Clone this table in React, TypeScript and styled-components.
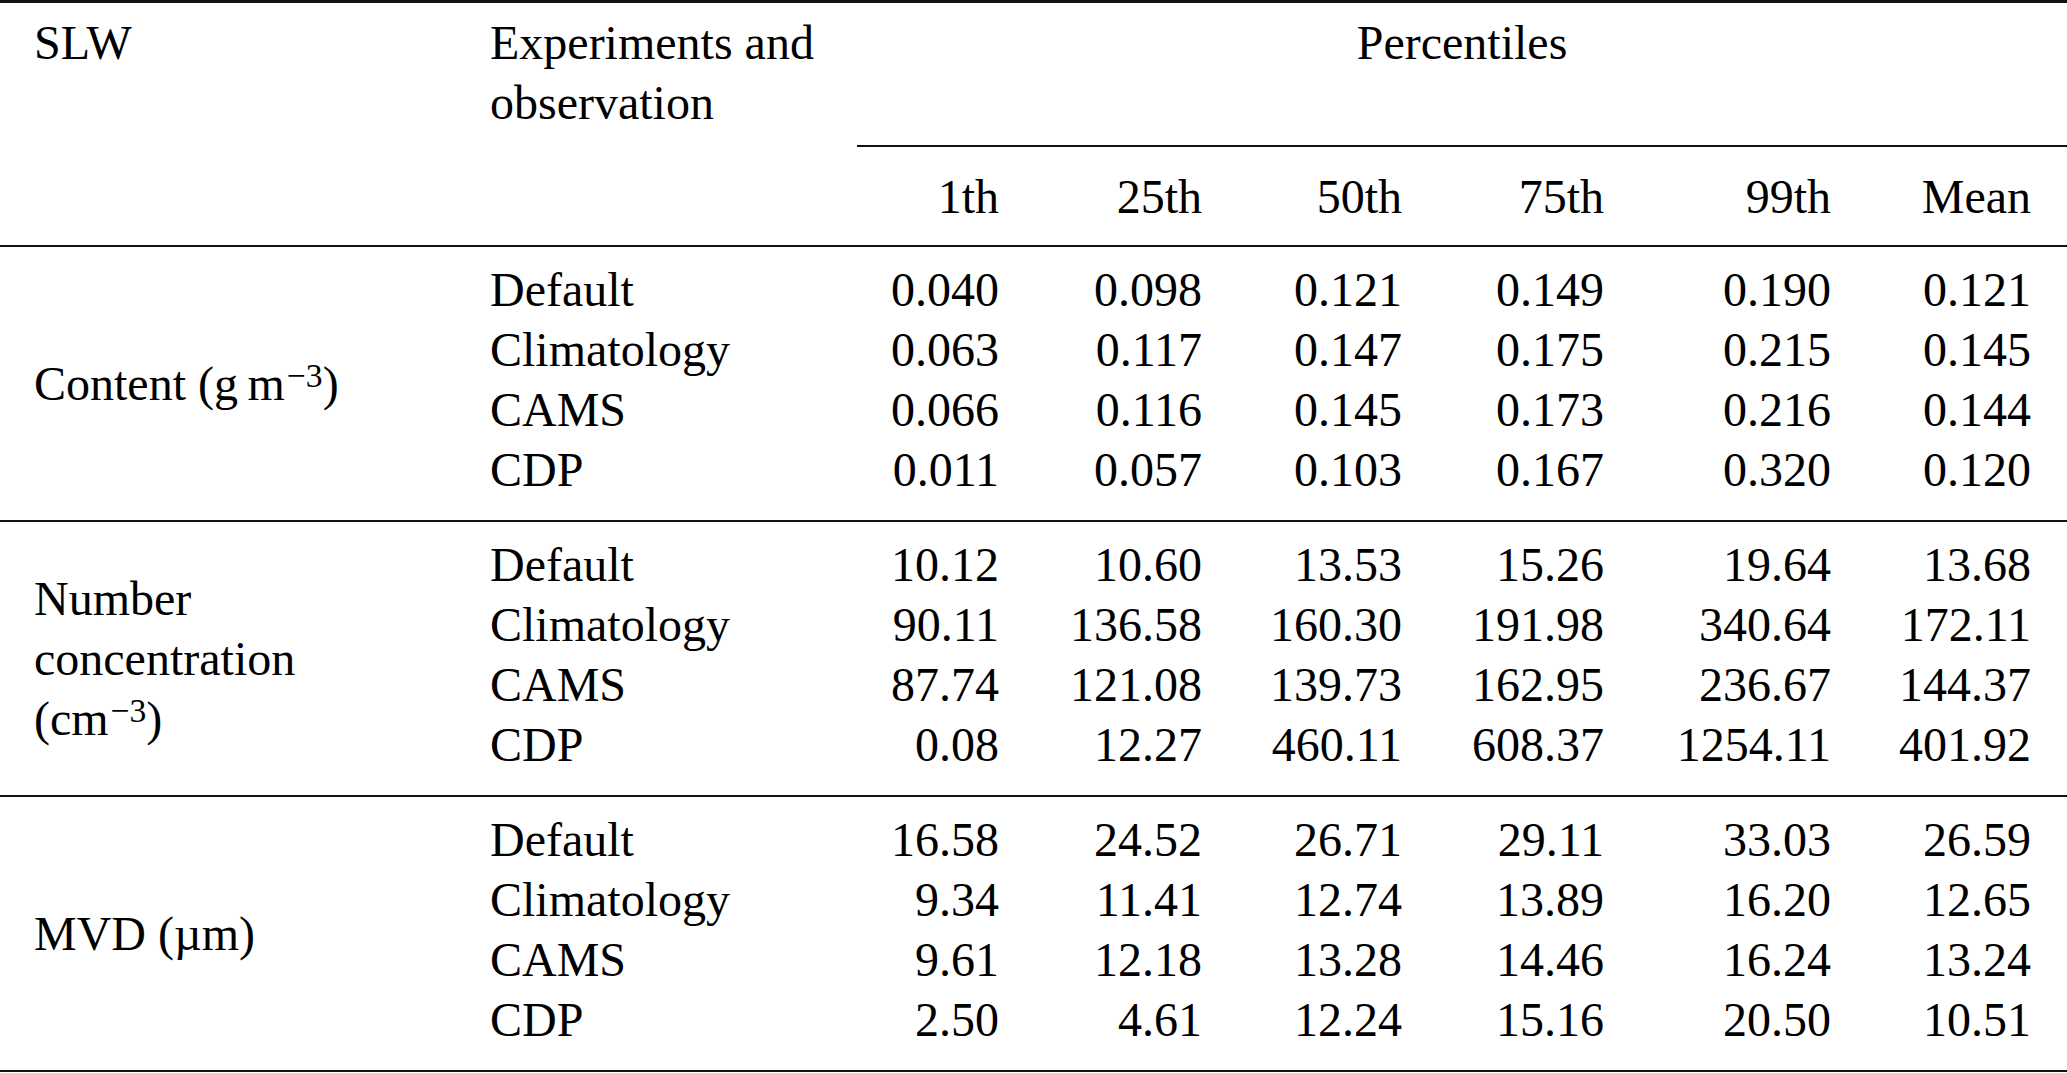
import React from "react";
import styled, { createGlobalStyle } from "styled-components";

type Edge = "first" | "mid" | "last";

// Styled components for the table

const GlobalStyle = createGlobalStyle`
  html, body {
    margin: 0;
    padding: 0;
    background: #fff;
  }
  body {
    font-family: "Liberation Serif", "Times New Roman", serif;
    color: #000;
  }
`;

// whole table, full page width
const Table = styled.table`
  width: 2067px;
  table-layout: fixed;
  border-collapse: collapse;
  border-top: 3px solid #111;
  border-bottom: 2px solid #111;
  font-size: 48px;
  line-height: 60px;
`;

// header cells spanning both header rows
const HeadCell = styled.th`
  font-weight: normal;
  text-align: left;
  vertical-align: top;
  padding: 10px 0 0 34px;
  white-space: nowrap;
`;

// "Percentiles" with its partial rule under it
const SpanCell = styled.th`
  font-weight: normal;
  text-align: center;
  vertical-align: top;
  padding: 10px 0 72px 0;
  border-bottom: 2px solid #111;
`;

// percentile column titles
const PctCell = styled.th`
  font-weight: normal;
  text-align: right;
  padding: 20px 36px 18px 0;
`;

// each SLW group, separated by a rule
const Block = styled.tbody`
  border-top: 2px solid #111;
`;

const LabelCell = styled.td`
  vertical-align: middle;
  padding: 0 0 0 34px;
  white-space: nowrap;
`;

const NameCell = styled.td<{ $edge: Edge }>`
  padding: ${(p) => (p.$edge === "first" ? "13px" : "0")} 0 ${(p) => (p.$edge === "last" ? "20px" : "0")} 34px;
  white-space: nowrap;
`;

const NumCell = styled.td<{ $edge: Edge }>`
  text-align: right;
  padding: ${(p) => (p.$edge === "first" ? "13px" : "0")} 36px ${(p) => (p.$edge === "last" ? "20px" : "0")} 0;
  white-space: nowrap;
`;

// superscript exponent that does not stretch the line
const Sup = styled.span`
  font-size: 0.7em;
  line-height: 0;
  vertical-align: 0.36em;
  margin-left: 2px;
`;

// One row of the table: experiment name plus the six percentile values
interface Line {
    name: string;
    values: string[];
}

// A block of four lines that share one SLW label
interface Group {
    key: string;
    label: React.ReactNode;
    lines: Line[];
}

const groups: Group[] = [
    {
        key: "content",
        label: <>Content (g{"\u2009"}m<Sup>−3</Sup>)</>,
        lines: [
            { name: "Default", values: ["0.040", "0.098", "0.121", "0.149", "0.190", "0.121"] },
            { name: "Climatology", values: ["0.063", "0.117", "0.147", "0.175", "0.215", "0.145"] },
            { name: "CAMS", values: ["0.066", "0.116", "0.145", "0.173", "0.216", "0.144"] },
            { name: "CDP", values: ["0.011", "0.057", "0.103", "0.167", "0.320", "0.120"] },
        ],
    },
    {
        key: "number",
        label: <>Number<br />concentration<br />(cm<Sup>−3</Sup>)</>,
        lines: [
            { name: "Default", values: ["10.12", "10.60", "13.53", "15.26", "19.64", "13.68"] },
            { name: "Climatology", values: ["90.11", "136.58", "160.30", "191.98", "340.64", "172.11"] },
            { name: "CAMS", values: ["87.74", "121.08", "139.73", "162.95", "236.67", "144.37"] },
            { name: "CDP", values: ["0.08", "12.27", "460.11", "608.37", "1254.11", "401.92"] },
        ],
    },
    {
        key: "mvd",
        label: <>MVD (µm)</>,
        lines: [
            { name: "Default", values: ["16.58", "24.52", "26.71", "29.11", "33.03", "26.59"] },
            { name: "Climatology", values: ["9.34", "11.41", "12.74", "13.89", "16.20", "12.65"] },
            { name: "CAMS", values: ["9.61", "12.18", "13.28", "14.46", "16.24", "13.24"] },
            { name: "CDP", values: ["2.50", "4.61", "12.24", "15.16", "20.50", "10.51"] },
        ],
    },
];

const percentiles = ["1th", "25th", "50th", "75th", "99th", "Mean"];
// column widths in px (label, experiment, then the six numbers)
const widths = [456, 401, 178, 203, 200, 202, 227, 200];

export default function App() {
    return (
        <>
            <GlobalStyle />
            <Table>
                <colgroup>
                    {widths.map((w, i) => <col key={i} style={{ width: w }} />)}
                </colgroup>
                <thead>
                    <tr>
                        <HeadCell rowSpan={2}>SLW</HeadCell>
                        <HeadCell rowSpan={2}>Experiments and<br />observation</HeadCell>
                        <SpanCell colSpan={6}>Percentiles</SpanCell>
                    </tr>
                    <tr>
                        {percentiles.map((p) => <PctCell key={p}>{p}</PctCell>)}
                    </tr>
                </thead>
                {groups.map((group) => (
                    <Block key={group.key}>
                        {group.lines.map((line, i) => {
                            const edge: Edge = i === 0 ? "first" : i === group.lines.length - 1 ? "last" : "mid";
                            return (
                                <tr key={line.name}>
                                    {i === 0 && <LabelCell rowSpan={group.lines.length}>{group.label}</LabelCell>}
                                    <NameCell $edge={edge}>{line.name}</NameCell>
                                    {line.values.map((v, j) => <NumCell key={j} $edge={edge}>{v}</NumCell>)}
                                </tr>
                            );
                        })}
                    </Block>
                ))}
            </Table>
        </>
    );
}
